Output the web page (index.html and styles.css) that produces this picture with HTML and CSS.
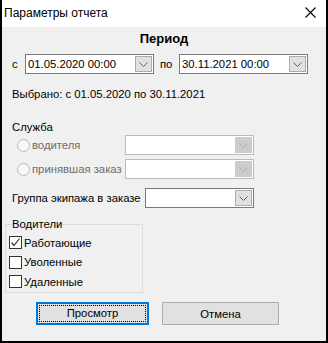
FILE: index.html
```html
<!DOCTYPE html>
<html lang="ru">
<head>
    <meta charset="UTF-8">
    <title>Параметры отчета</title>
    <link rel="stylesheet" href="styles.css">
</head>
<body>
	<div class="window">
		<div class="titlebar">
			<span class="title">Параметры отчета</span>
			<svg class="close" width="11" height="11" viewBox="0 0 11 11"><path d="M0.5 0.5L10.5 10.5M10.5 0.5L0.5 10.5" stroke="#000" stroke-width="1.1"/></svg>
		</div>
		<div class="content">
			<h1 class="heading">Период</h1>
			<div class="period">
				<span class="lbl-c">с</span>
				<div class="combo date">
					<span class="val">01.05.2020 00:00</span>
					<span class="drop"><svg width="9" height="5" viewBox="0 0 9 5"><path d="M0.5 0.5L4.5 4.5L8.5 0.5" fill="none" stroke="#606060"/></svg></span>
				</div>
				<span class="lbl-po">по</span>
				<div class="combo date">
					<span class="val">30.11.2021 00:00</span>
					<span class="drop"><svg width="9" height="5" viewBox="0 0 9 5"><path d="M0.5 0.5L4.5 4.5L8.5 0.5" fill="none" stroke="#606060"/></svg></span>
				</div>
			</div>
			<p class="chosen">Выбрано: с 01.05.2020 по 30.11.2021</p>
			<p class="section">Служба</p>
			<div class="radio-row">
				<label class="radio-label"><span class="radio"></span>водителя</label>
				<div class="combo service disabled">
					<span class="val"></span>
					<span class="drop"><svg width="9" height="5" viewBox="0 0 9 5"><path d="M0.5 0.5L4.5 4.5L8.5 0.5" fill="none" stroke="#a8a8a8"/></svg></span>
				</div>
			</div>
			<div class="radio-row">
				<label class="radio-label"><span class="radio"></span>принявшая заказ</label>
				<div class="combo service disabled">
					<span class="val"></span>
					<span class="drop"><svg width="9" height="5" viewBox="0 0 9 5"><path d="M0.5 0.5L4.5 4.5L8.5 0.5" fill="none" stroke="#a8a8a8"/></svg></span>
				</div>
			</div>
			<div class="group-row">
				<span class="group-label">Группа экипажа в заказе</span>
				<div class="combo group">
					<span class="val"></span>
					<span class="drop"><svg width="9" height="5" viewBox="0 0 9 5"><path d="M0.5 0.5L4.5 4.5L8.5 0.5" fill="none" stroke="#606060"/></svg></span>
				</div>
			</div>
			<fieldset class="drivers">
				<legend>Водители</legend>
				<label class="check-row"><span class="check"><svg width="11" height="11" viewBox="0 0 11 11"><path d="M1.5 5.5L4 8.5L9.5 1.5" fill="none" stroke="#333" stroke-width="1.2"/></svg></span>Работающие</label>
				<label class="check-row"><span class="check"></span>Уволенные</label>
				<label class="check-row"><span class="check"></span>Удаленные</label>
			</fieldset>
			<div class="buttons">
				<button class="btn primary"><span class="focus">Просмотр</span></button>
				<button class="btn cancel">Отмена</button>
			</div>
		</div>
	</div>
</body>
</html>
```

FILE: styles.css
```css
	* {
		box-sizing: border-box;
	}
	body {
		margin: 0;
		font-family: "Liberation Sans", Arial, sans-serif;
		font-size: 11.3px;
		color: #000;
		white-space: nowrap;
	}
	.window {
		width: 328px;
		height: 343px;
		border: 2px solid #000;
		border-top: 0;
		background: #f0f0f0;
	}
	.titlebar {
		height: 27px;
		background: #fff;
		display: flex;
		align-items: center;
		justify-content: space-between;
		padding: 0 10px 0 2px;
	}
	.title {
		font-size: 12px;
		line-height: 16px;
		margin-top: -1px;
	}
	.close {
		margin-top: -2px;
	}
	.content {
		padding: 0 10px;
	}
	.heading {
		margin: 4px 0 0;
		font-size: 13px;
		line-height: 16px;
		font-weight: bold;
		text-align: center;
	}
	.period {
		display: flex;
		align-items: center;
		margin-top: 7px;
	}
	.lbl-c {
		width: 13px;
	}
	.lbl-po {
		width: 19px;
		margin-left: 6px;
	}
	.combo {
		height: 20px;
		display: flex;
		align-items: center;
		justify-content: space-between;
		background: #fff;
		border: 1px solid #7a7a7a;
		padding: 0 1px 0 2px;
		flex-shrink: 0;
	}
	.combo.date {
		width: 129px;
	}
	.combo.service {
		width: 129px;
	}
	.combo.group {
		width: 109px;
	}
	.combo.disabled {
		border-color: #bcbcbc;
	}
	.drop {
		width: 17px;
		height: 16px;
		background: #e1e1e1;
		border: 1px solid #acacac;
		display: flex;
		align-items: center;
		justify-content: center;
		padding-top: 1px;
	}
	.disabled .drop {
		background: #cccccc;
		border-color: #cccccc;
	}
	.chosen {
		margin: 12px 0 0;
		line-height: 16px;
	}
	.section {
		margin: 17px 0 0;
		line-height: 16px;
	}
	.radio-row {
		display: flex;
		align-items: center;
		margin-bottom: 4px;
	}
	.radio-label {
		width: 113px;
		flex-shrink: 0;
		display: flex;
		align-items: center;
		padding-left: 5px;
		color: #6d6d6d;
	}
	.radio {
		width: 13px;
		height: 13px;
		border-radius: 50%;
		border: 1px solid #bcbcbc;
		background: #f7f7f7;
		margin-right: 2px;
	}
	.group-row {
		display: flex;
		align-items: center;
		margin-top: 9px;
	}
	.group-label {
		width: 133px;
		flex-shrink: 0;
	}
	.drivers {
		margin: 9px 0 0 -7px;
		width: 138px;
		height: 76px;
		border: 1px solid #dcdcdc;
		padding: 2px 3px 0;
	}
	.drivers legend {
		padding: 0;
		margin-left: 3px;
		line-height: 14px;
	}
	.check-row {
		display: flex;
		align-items: center;
		height: 19.5px;
	}
	.check {
		width: 13px;
		height: 13px;
		border: 1px solid #333;
		background: #fff;
		margin-right: 2px;
		display: flex;
		align-items: center;
		justify-content: center;
	}
	.buttons {
		display: flex;
		margin: 9px 0 0 24px;
		gap: 13px;
	}
	.btn {
		height: 23px;
		font-family: inherit;
		font-size: 11.3px;
		background: #e1e1e1;
		border: 1px solid #adadad;
		padding: 0;
		color: #000;
	}
	.btn.primary {
		width: 113px;
		border: 2px solid #0078d7;
		padding: 1px;
	}
	.btn.primary .focus {
		display: block;
		height: 100%;
		line-height: 15px;
		border: 1px dotted #000;
	}
	.btn.cancel {
		width: 117px;
	}
```
